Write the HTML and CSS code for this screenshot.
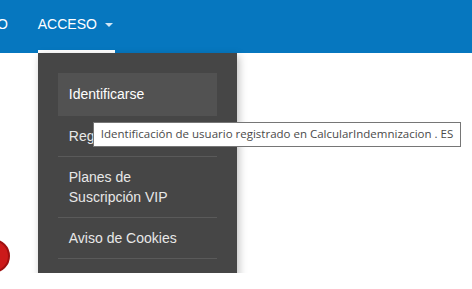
FILE: index.html
```
<!DOCTYPE html>
<html lang="es">
<head>
<meta charset="utf-8">
<title>Acceso</title>
<link rel="stylesheet" href="styles.css">
</head>
<body>
<header class="topbar">
  <nav class="nav">
    <a class="nav-item nav-first" href="#">INICIO</a>
    <div class="nav-item nav-active">
      <span>ACCESO</span><span class="caret"></span>
      <ul class="dropdown">
        <li class="dd-item dd-hover">Identificarse</li>
        <li class="dd-item">Registrarse</li>
        <li class="dd-item">Planes de<br>Suscripción VIP</li>
        <li class="dd-item">Aviso de Cookies</li>
      </ul>
      <div class="tooltip">Identificación de usuario registrado en CalcularIndemnizacion . ES</div>
    </div>
  </nav>
</header>
<main class="content">
  <div class="badge"></div>
</main>
</body>
</html>
```
FILE: styles.css
```
html, body {
  margin: 0;
  padding: 0;
  background: #ffffff;
  font-family: "Liberation Sans", Arial, sans-serif;
  overflow: hidden;
}
.topbar {
  height: 53px;
  background: #0677bf;
}
.nav {
  display: flex;
  align-items: stretch;
  height: 53px;
}
.nav-item {
  display: flex;
  align-items: center;
  color: #ffffff;
  font-size: 14px;
  text-decoration: none;
  box-sizing: border-box;
  height: 53px;
  padding-bottom: 5px;
}
.nav-first {
  margin-left: -35px;
  margin-right: 30px;
}
.nav-active {
  position: relative;
  border-bottom: 3px solid #ffffff;
  padding-bottom: 2px;
  padding-right: 2px;
}
.caret {
  display: inline-block;
  width: 0;
  height: 0;
  margin-left: 8px;
  margin-top: 1px;
  border-left: 4px solid transparent;
  border-right: 4px solid transparent;
  border-top: 4px solid #cfe6f5;
}
.dropdown {
  position: absolute;
  top: 53px;
  left: 0;
  width: 199px;
  box-sizing: border-box;
  margin: 0;
  padding: 20px 20px 22px;
  list-style: none;
  background: #464646;
  box-shadow: 2px 3px 8px rgba(0, 0, 0, 0.25);
  z-index: 2;
}
.dd-item {
  padding: 10px 11px;
  line-height: 20px;
  font-size: 14px;
  color: #e8e8e8;
  border-bottom: 1px solid #5a5a5a;
}
.dd-hover {
  padding: 11px 11px;
  background: #525252;
  color: #ffffff;
  border-bottom-color: #525252;
}
.tooltip {
  position: absolute;
  top: 122px;
  left: 55px;
  z-index: 3;
  white-space: nowrap;
  background: #ffffff;
  border: 1px solid #767676;
  padding: 3px 7px 4px;
  font-family: "Open Sans", "Noto Sans", sans-serif;
  font-size: 11.5px;
  line-height: 16px;
  color: #4a4a4a;
}
.content {
  padding-top: 186px;
}
.badge {
  width: 30px;
  height: 30px;
  margin-left: -24px;
  border-radius: 50%;
  background: #cc1a1a;
  border: 2px solid #a01010;
}
```
